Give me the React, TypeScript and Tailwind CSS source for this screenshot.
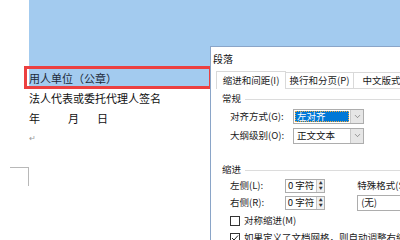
import { ChevronDown } from 'lucide-react';

const CJK = "font-['Noto_Sans_CJK_SC','Noto_Sans',sans-serif]";

function Dropdown({ value, selected }: { value: string; selected?: boolean }) {
  return (
    <div className="flex h-full w-[71px] border border-[#adadad] bg-white">
      <div className="flex flex-1 items-center p-px">
        <div
          className={
            selected
              ? 'flex h-full w-full items-center border border-dotted border-[#f2a93b] bg-[#0078d7] pl-px text-white'
              : 'flex h-full w-full items-center pl-[2px] text-[#111]'
          }
        >
          {value}
        </div>
      </div>
      <div className="flex w-[13px] items-center justify-center border-l border-[#c8c8c8] bg-[#e6e6e6]">
        <ChevronDown size={9} strokeWidth={1.5} className="text-[#555]" />
      </div>
    </div>
  );
}

function SpinBox({ value }: { value: string }) {
  return (
    <div className="flex h-[14px] w-[46px] border border-[#adadad] bg-white">
      <div className="flex flex-1 items-center pl-[2px] text-[#111]">{value}</div>
      <div className="flex w-[8px] flex-col items-center justify-center border-l border-[#c8c8c8] bg-[#f0f0f0] text-[4px] leading-[5px] text-[#333]">
        <span>▲</span>
        <span>▼</span>
      </div>
    </div>
  );
}

function SectionTitle({ label }: { label: string }) {
  return (
    <div className="flex h-[16px] items-center gap-[4px] pl-[6px]">
      <span>{label}</span>
      <div className="h-px flex-1 bg-[#dcdcdc]" />
    </div>
  );
}

function Check({ checked }: { checked?: boolean }) {
  return (
    <div className="flex h-[10px] w-[10px] items-center justify-center border border-[#333] bg-white">
      {checked && (
        <svg width="8" height="8" viewBox="0 0 8 8">
          <path d="M1 4 L3 6 L7 1.5" fill="none" stroke="#222" strokeWidth="1" />
        </svg>
      )}
    </div>
  );
}

function ParagraphDialog() {
  return (
    <div
      className={`absolute left-[210px] top-[46px] flex h-[200px] w-[200px] flex-col border-l border-t border-[#8aa5c8] bg-white text-[9.5px] leading-none text-[#1a1a1a] ${CJK}`}
    >
      {/* title bar */}
      <div className="flex h-[24px] items-center pl-[2px] text-[10px] text-[#111]">段落</div>

      {/* tabs */}
      <div className="flex h-[18px] items-end pl-[5px]">
        <div className="relative z-10 -mb-px flex h-[18px] w-[75px] items-center justify-center border border-b-0 border-[#d9d9d9] bg-white">
          缩进和间距(<u className="no-underline">I</u>)
        </div>
        <div className="flex h-[16px] w-[73px] items-center justify-center border border-l-0 border-b-0 border-[#d9d9d9] bg-white">
          换行和分页(P)
        </div>
        <div className="flex h-[16px] w-[60px] items-center justify-center whitespace-nowrap border border-l-0 border-b-0 border-[#d9d9d9] bg-white">
          中文版式
        </div>
      </div>

      {/* tab panel */}
      <div className="ml-[5px] flex flex-1 flex-col border-t border-[#d9d9d9] pt-[2px]">
        <SectionTitle label="常规" />
        <div className="flex h-[19px] items-center">
          <span className="w-[77px] pl-[14px]">对齐方式(G):</span>
          <div className="h-[15px]">
            <Dropdown value="左对齐" selected />
          </div>
        </div>
        <div className="flex h-[19px] items-center">
          <span className="w-[77px] pl-[14px]">大纲级别(O):</span>
          <div className="h-[16px]">
            <Dropdown value="正文文本" />
          </div>
        </div>
        <div className="h-[17px]" />
        <SectionTitle label="缩进" />
        <div className="flex h-[16px] items-center">
          <span className="w-[77px] pl-[14px]">左侧(L):</span>
          <SpinBox value="0 字符" />
          <span className="ml-[32px] whitespace-nowrap">特殊格式(S):</span>
        </div>
        <div className="flex h-[18px] items-center">
          <span className="w-[77px] pl-[14px]">右侧(R):</span>
          <SpinBox value="0 字符" />
          <div className="ml-[32px] flex h-[16px] w-[60px] items-center border border-[#adadad] pl-[3px]">
            (无)
          </div>
        </div>
        <div className="flex h-[18px] items-center gap-[4px] pl-[14px]">
          <Check />
          <span>对称缩进(M)</span>
        </div>
        <div className="flex h-[16px] items-center gap-[4px] pl-[14px]">
          <Check checked />
          <span className="whitespace-nowrap">如果定义了文档网格，则自动调整右缩进(D)</span>
        </div>
      </div>
    </div>
  );
}

export default function App() {
  return (
    <div className={`relative h-[240px] w-[400px] overflow-hidden bg-white ${CJK}`}>
      {/* document page */}
      <div className="flex flex-col pl-[29px] text-[11px] leading-none text-[#111]">
        <div className="h-[68px] bg-[#a3cbef]" />
        <div className="flex h-[20px] items-center bg-[#a3cbef] text-[#1c2a3a]">用人单位（公章）</div>
        <div className="flex h-[20px] items-center">法人代表或委托代理人签名</div>
        <div className="flex h-[20px] items-center">
          <span className="w-[39px]">年</span>
          <span className="w-[29px]">月</span>
          <span>日</span>
        </div>
        <div className="flex h-[20px] items-center text-[8px] text-[#9a9a9a]">↵</div>
        <div className="mt-[19px] -ml-[19px] h-[19px] w-[19px] border-r border-t border-[#b8b8b8]" />
      </div>

      {/* highlight box */}
      <div className="absolute left-[24px] top-[66px] h-[23px] w-[188px] border-[3px] border-[#ec4040]" />

      <ParagraphDialog />
    </div>
  );
}
